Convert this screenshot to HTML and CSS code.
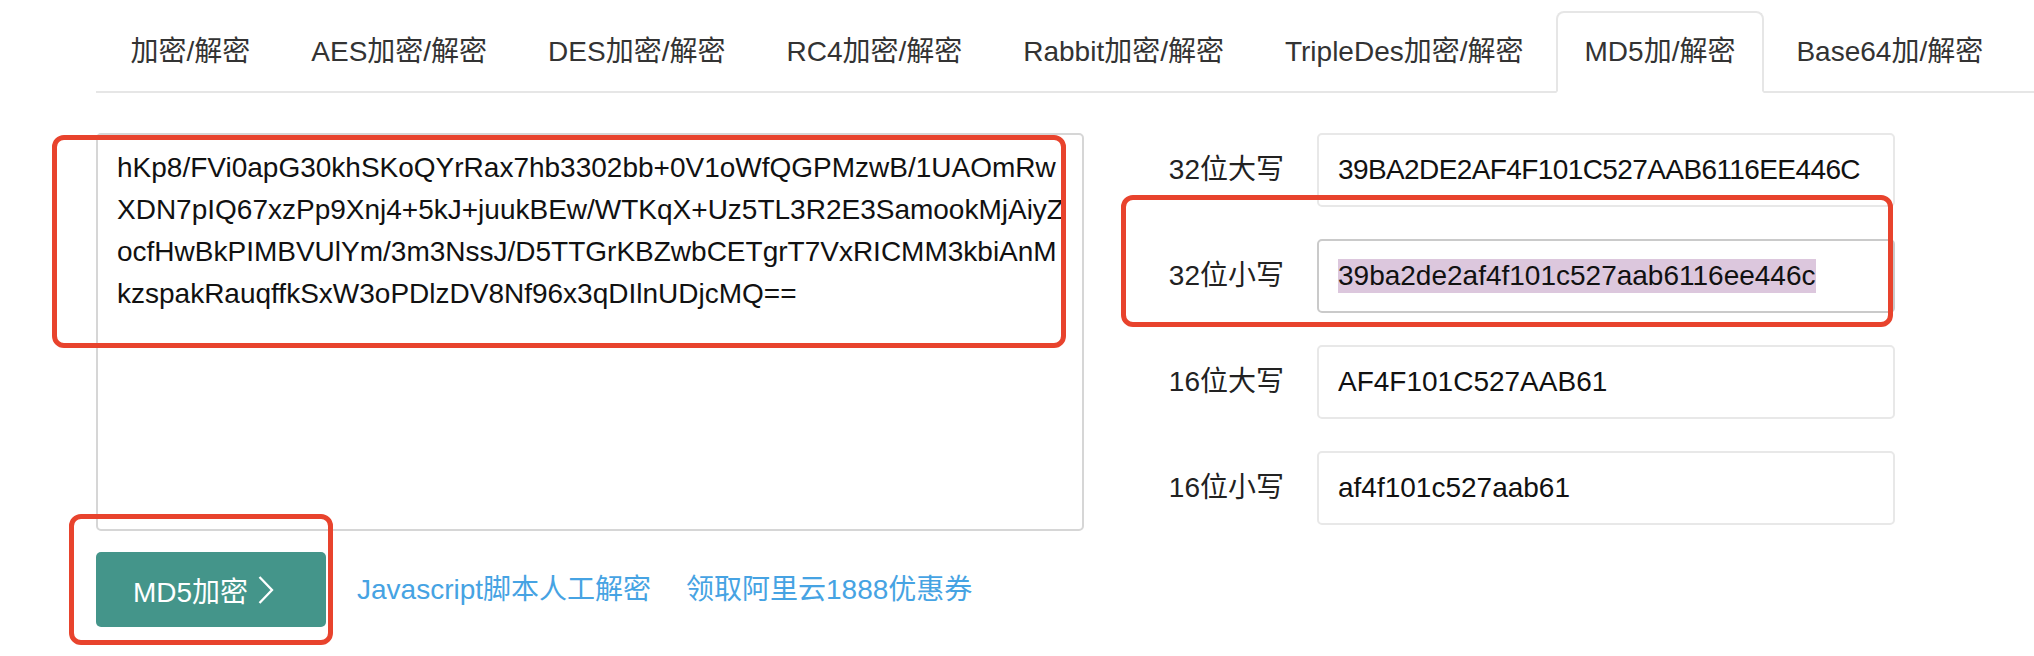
FILE: index.html
```html
<!DOCTYPE html>
<html lang="zh-CN">
<head>
<meta charset="utf-8">
<title>MD5加/解密</title>
<link rel="stylesheet" href="styles.css">
</head>
<body>
<div class="page">
  <nav class="tabs">
    <a class="tab">加密/解密</a>
    <a class="tab">AES加密/解密</a>
    <a class="tab">DES加密/解密</a>
    <a class="tab">RC4加密/解密</a>
    <a class="tab">Rabbit加密/解密</a>
    <a class="tab">TripleDes加密/解密</a>
    <a class="tab active">MD5加/解密</a>
    <a class="tab">Base64加/解密</a>
  </nav>
  <div class="content">
    <div class="left">
      <textarea class="source" readonly spellcheck="false">hKp8/FVi0apG30khSKoQYrRax7hb3302bb+0V1oWfQGPMzwB/1UAOmRw
XDN7pIQ67xzPp9Xnj4+5kJ+juukBEw/WTKqX+Uz5TL3R2E3SamookMjAiyZ
ocfHwBkPIMBVUlYm/3m3NssJ/D5TTGrKBZwbCETgrT7VxRICMM3kbiAnM
kzspakRauqffkSxW3oPDlzDV8Nf96x3qDIlnUDjcMQ==</textarea>
      <div class="actions">
        <button class="btn">MD5加密<svg class="chev" viewBox="0 0 18 30" width="18" height="30"><polyline points="2.5,2 15,15 2.5,28" fill="none" stroke="#fff" stroke-width="2.3"/></svg></button>
        <a class="link">Javascript脚本人工解密</a>
        <a class="link">领取阿里云1888优惠券</a>
      </div>
    </div>
    <div class="right">
      <div class="row"><span class="label">32位大写</span><input class="field field-tight" readonly value="39BA2DE2AF4F101C527AAB6116EE446C"></div>
      <div class="row"><span class="label">32位小写</span><div class="field field-focus"><span class="sel">39ba2de2af4f101c527aab6116ee446c</span></div></div>
      <div class="row"><span class="label">16位大写</span><input class="field" readonly value="AF4F101C527AAB61"></div>
      <div class="row"><span class="label">16位小写</span><input class="field" readonly value="af4f101c527aab61"></div>
    </div>
  </div>
  <div class="mark mark-source"></div>
  <div class="mark mark-field"></div>
  <div class="mark mark-btn"></div>
</div>
</body>
</html>
```
FILE: styles.css
```css
* { box-sizing: border-box; }
html, body { margin: 0; padding: 0; background: #fff; }
body {
  font-family: "Liberation Sans", "Noto Sans CJK SC", sans-serif;
  font-size: 28px;
  line-height: 40px;
  color: #222;
}
.page {
  position: relative;
  width: 2034px;
  height: 656px;
  padding: 11px 0 0 96px;
  overflow: hidden;
}
.tabs {
  display: flex;
  gap: 4px;
  padding-left: 6px;
  border-bottom: 2px solid #e6e6e6;
}
.tab {
  display: block;
  padding: 19px 26.5px;
  border: 2px solid transparent;
  border-radius: 8px 8px 0 0;
  margin-bottom: -2px;
  color: #333;
  line-height: 40px;
  white-space: nowrap;
  cursor: pointer;
}
.tab.active {
  border-color: #e6e6e6;
  border-bottom-color: #fff;
  background: #fff;
}
.content {
  display: flex;
  margin-top: 40px;
}
.left {
  width: 988px;
  display: flex;
  flex-direction: column;
}
.source {
  display: block;
  width: 988px;
  height: 398px;
  margin: 0;
  padding: 12px 19px;
  border: 2px solid #d6d6d6;
  border-radius: 5px;
  font-family: "Liberation Sans", "Noto Sans CJK SC", sans-serif;
  font-size: 28px;
  line-height: 42px;
  color: #111;
  white-space: pre;
  overflow: hidden;
  resize: none;
  outline: none;
}
.actions {
  display: flex;
  align-items: center;
  margin-top: 21px;
}
.btn {
  display: flex;
  align-items: center;
  width: 230px;
  height: 75px;
  padding: 0 0 0 37px;
  border: none;
  border-radius: 5px;
  background: #44958a;
  color: #fff;
  font-family: "Liberation Sans", "Noto Sans CJK SC", sans-serif;
  font-size: 28px;
  cursor: pointer;
}
.chev {
  margin-left: 9px;
}
.link {
  color: #46a3e3;
  margin-left: 31px;
  white-space: nowrap;
  cursor: pointer;
}
.link + .link { margin-left: 35px; }
.right {
  display: flex;
  flex-direction: column;
  gap: 32px;
}
.row {
  display: flex;
  align-items: center;
  gap: 33px;
  height: 74px;
}
.label {
  width: 200px;
  text-align: right;
  color: #222;
  white-space: nowrap;
}
.field {
  display: flex;
  align-items: center;
  width: 578px;
  height: 74px;
  margin: 0;
  padding: 0 19px;
  border: 2px solid #e8e8e8;
  border-radius: 5px;
  background: #fff;
  font-family: "Liberation Sans", "Noto Sans CJK SC", sans-serif;
  font-size: 28px;
  color: #111;
  outline: none;
}
.field-tight {
  letter-spacing: -0.6px;
}
.field-focus {
  border-color: #cacaca;
}
.sel {
  background: #dcc7dd;
  line-height: 34px;
}
.mark {
  position: absolute;
  border: 5px solid #e8432d;
  border-radius: 12px;
  pointer-events: none;
}
.mark-source { left: 52px; top: 135px; width: 1014px; height: 213px; }
.mark-field { left: 1121px; top: 195px; width: 772px; height: 132px; }
.mark-btn { left: 69px; top: 514px; width: 264px; height: 131px; }
```
